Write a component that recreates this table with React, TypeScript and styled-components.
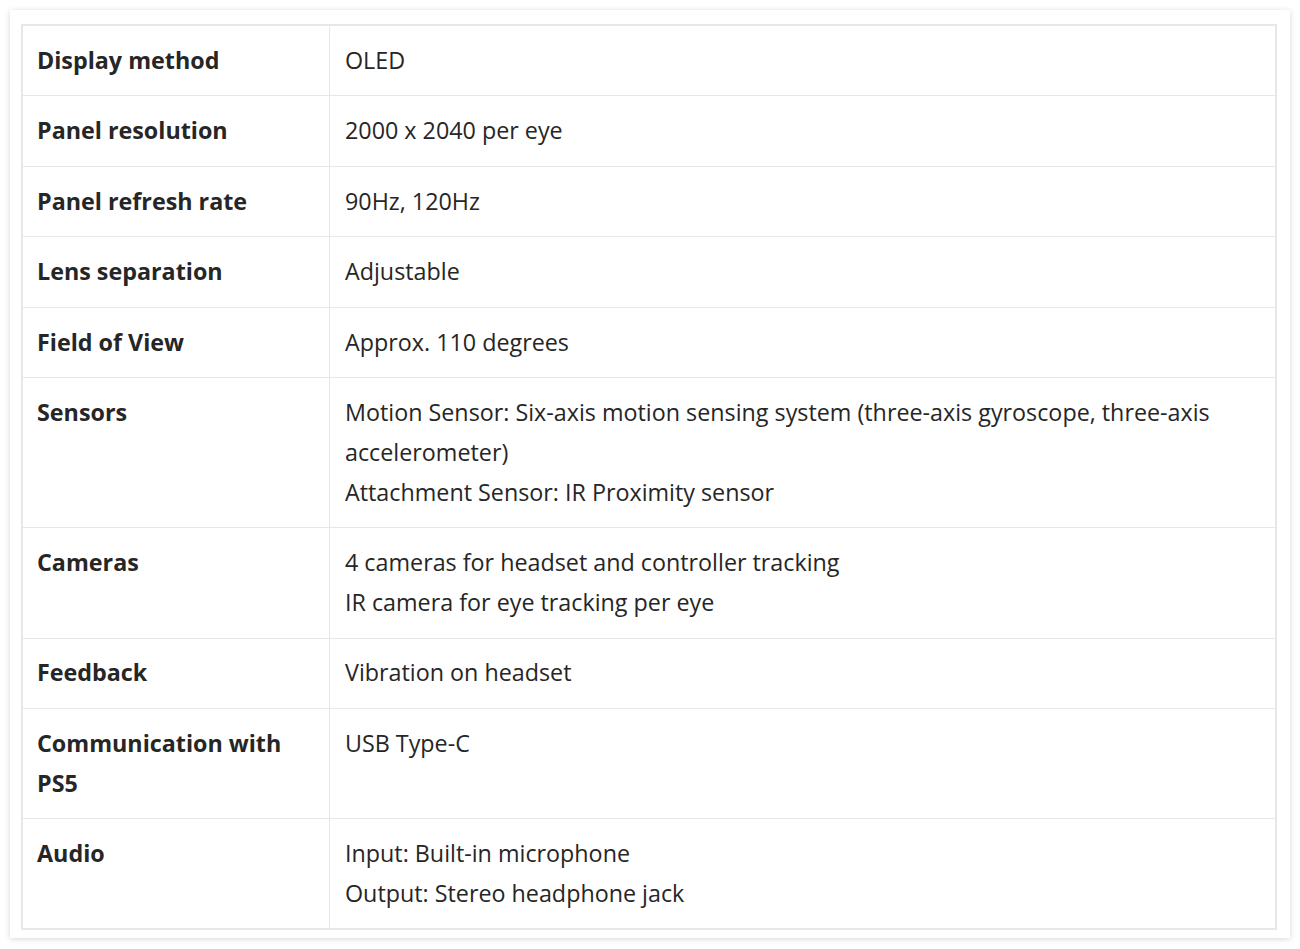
import React from "react";
import styled, { createGlobalStyle } from "styled-components";

const Global = createGlobalStyle`
  html, body { margin: 0; padding: 0; background: #ffffff; }
  body { font-family: "Open Sans", "Noto Sans", sans-serif; color: #262626; }
`;

const Page = styled.div`
  width: 1300px;
  height: 949px;
  padding: 10px;
  box-sizing: border-box;
`;

const Card = styled.div`
  width: 1280px;
  height: 928px;
  box-sizing: border-box;
  padding: 14px 13px 9px 11px;
  background: #ffffff;
  box-shadow: 0 1px 6px rgba(0, 0, 0, 0.16);
`;

const Table = styled.table`
  width: 100%;
  border-collapse: collapse;
  border: 2px solid #e6e8e8;
  font-size: 23.3px;
  line-height: 39.7px;
`;

const Row = styled.tr`
  border-bottom: 1px solid #e6e8e8;
`;

const Head = styled.th`
  width: 278px;
  text-align: left;
  vertical-align: top;
  font-weight: 700;
  padding: 14.9px 14px;
  border-right: 1px solid #e6e8e8;
  color: #262626;
`;

const Cell = styled.td`
  vertical-align: top;
  padding: 14.9px 15px;
  color: #262626;
`;

const rows: [string, string[]][] = [
  ["Display method", ["OLED"]],
  ["Panel resolution", ["2000 x 2040 per eye"]],
  ["Panel refresh rate", ["90Hz, 120Hz"]],
  ["Lens separation", ["Adjustable"]],
  ["Field of View", ["Approx. 110 degrees"]],
  [
    "Sensors",
    [
      "Motion Sensor: Six-axis motion sensing system (three-axis gyroscope, three-axis accelerometer)",
      "Attachment Sensor: IR Proximity sensor",
    ],
  ],
  [
    "Cameras",
    ["4 cameras for headset and controller tracking", "IR camera for eye tracking per eye"],
  ],
  ["Feedback", ["Vibration on headset"]],
  ["Communication with PS5", ["USB Type-C"]],
  ["Audio", ["Input: Built-in microphone", "Output: Stereo headphone jack"]],
];

export default function App() {
  return (
    <Page>
      <Global />
      <Card>
        <Table>
          <tbody>
            {rows.map(([k, v]) => (
              <Row key={k}>
                <Head>{k}</Head>
                <Cell>
                  {v.map((line, i) => (
                    <React.Fragment key={i}>
                      {i > 0 && <br />}
                      {line}
                    </React.Fragment>
                  ))}
                </Cell>
              </Row>
            ))}
          </tbody>
        </Table>
      </Card>
    </Page>
  );
}
